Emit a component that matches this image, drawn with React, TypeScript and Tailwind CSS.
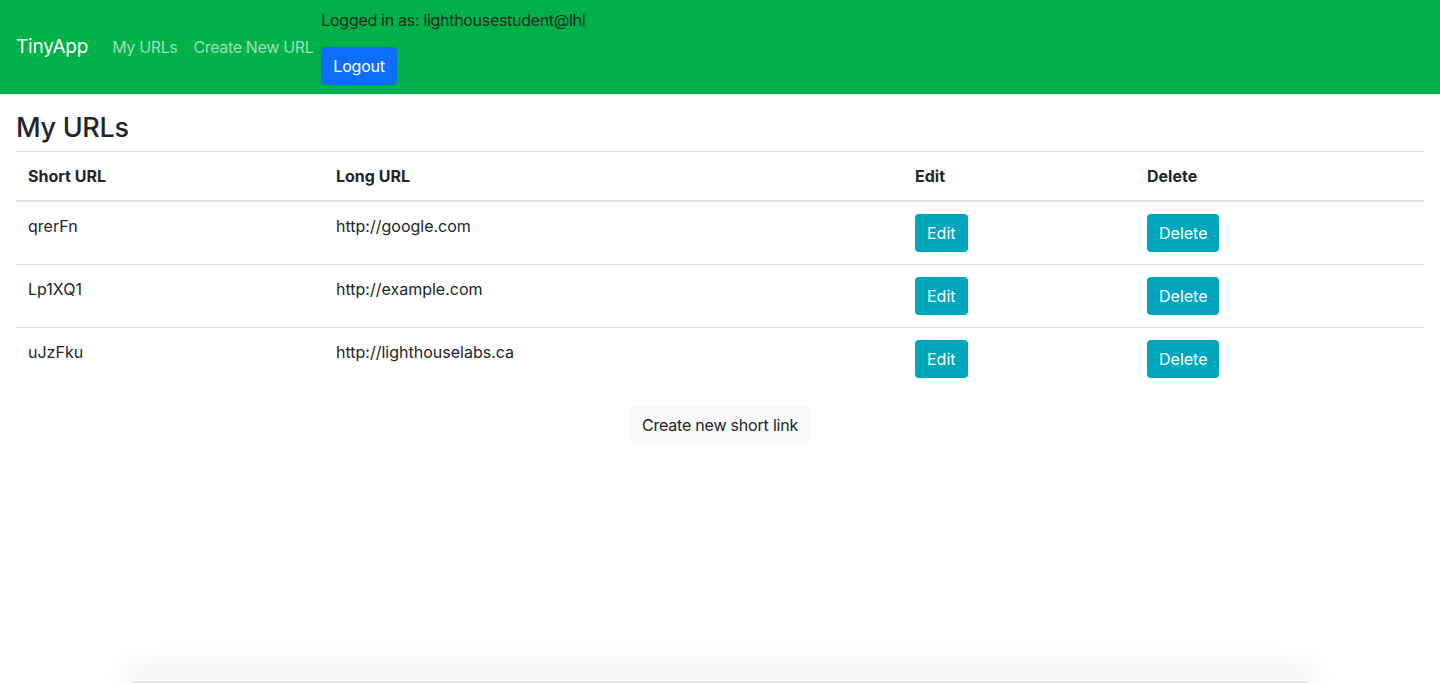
import React from "react";

const urls = [
  { id: "qrerFn", long: "http://google.com" },
  { id: "Lp1XQ1", long: "http://example.com" },
  { id: "uJzFku", long: "http://lighthouselabs.ca" },
];

export default function App() {
  return (
    <div
      className="relative flex min-h-[683px] flex-col overflow-hidden bg-white text-[#212529]"
      style={{ fontFamily: "Inter, 'Noto Sans', sans-serif" }}
    >
      {/* Navbar */}
      <nav className="flex h-[94px] items-center bg-[#00b149] px-4">
        <span className="mr-4 text-[19px] leading-[30px] tracking-[-0.2px] text-white">TinyApp</span>
        <a className="px-2 text-[16px] leading-6 tracking-[-0.35px] text-[#9fe0b9]">My URLs</a>
        <a className="px-2 text-[16px] leading-6 tracking-[-0.35px] text-[#9fe0b9]">Create New URL</a>
        <div className="flex flex-col items-start self-stretch pt-2">
          <span className="text-[16px] leading-6 tracking-[-0.3px] text-[#1c2b22]">
            Logged in as: lighthousestudent@lhl
          </span>
          <button className="mt-[15px] h-[38px] rounded-[4px] bg-[#0d6efd] px-3 text-[16px] tracking-[-0.2px] text-white">
            Logout
          </button>
        </div>
      </nav>

      {/* Content */}
      <main className="px-4">
        <h3 className="mt-[16px] mb-[5px] text-[27px] leading-[36px] font-medium tracking-[-0.3px]">My URLs</h3>
        <table className="w-full border-collapse text-[16px] leading-6">
          <thead>
            <tr className="border-t border-[#dee2e6]">
              <th className="w-[308px] border-b-2 border-[#dee2e6] p-3 text-left font-bold">Short URL</th>
              <th className="w-[579px] border-b-2 border-[#dee2e6] p-3 text-left font-bold">Long URL</th>
              <th className="w-[232px] border-b-2 border-[#dee2e6] p-3 text-left font-bold">Edit</th>
              <th className="border-b-2 border-[#dee2e6] p-3 text-left font-bold">Delete</th>
            </tr>
          </thead>
          <tbody>
            {urls.map((u, i) => (
              <tr key={u.id} className={i > 0 ? "border-t border-[#dee2e6]" : ""}>
                <td className="p-3 align-top">{u.id}</td>
                <td className="p-3 align-top">{u.long}</td>
                <td className="p-3 align-top">
                  <button className="h-[38px] rounded-[4px] bg-[#00a6bd] px-3 text-white">Edit</button>
                </td>
                <td className="p-3 align-top">
                  <button className="h-[38px] rounded-[4px] bg-[#00a6bd] px-3 text-white">Delete</button>
                </td>
              </tr>
            ))}
          </tbody>
        </table>
        <div className="mt-4 flex justify-center">
          <button className="h-[38px] rounded-[4px] bg-[#f8f9fa] px-3 text-[16px] tracking-[-0.2px] text-[#212529]">
            Create new short link
          </button>
        </div>
      </main>

      {/* bottom shadow strip */}
      <div className="mt-auto mx-[133px] h-[1px] bg-[#d4d4d4] shadow-[0_-8px_28px_10px_rgba(0,0,0,0.07)]" />
    </div>
  );
}
